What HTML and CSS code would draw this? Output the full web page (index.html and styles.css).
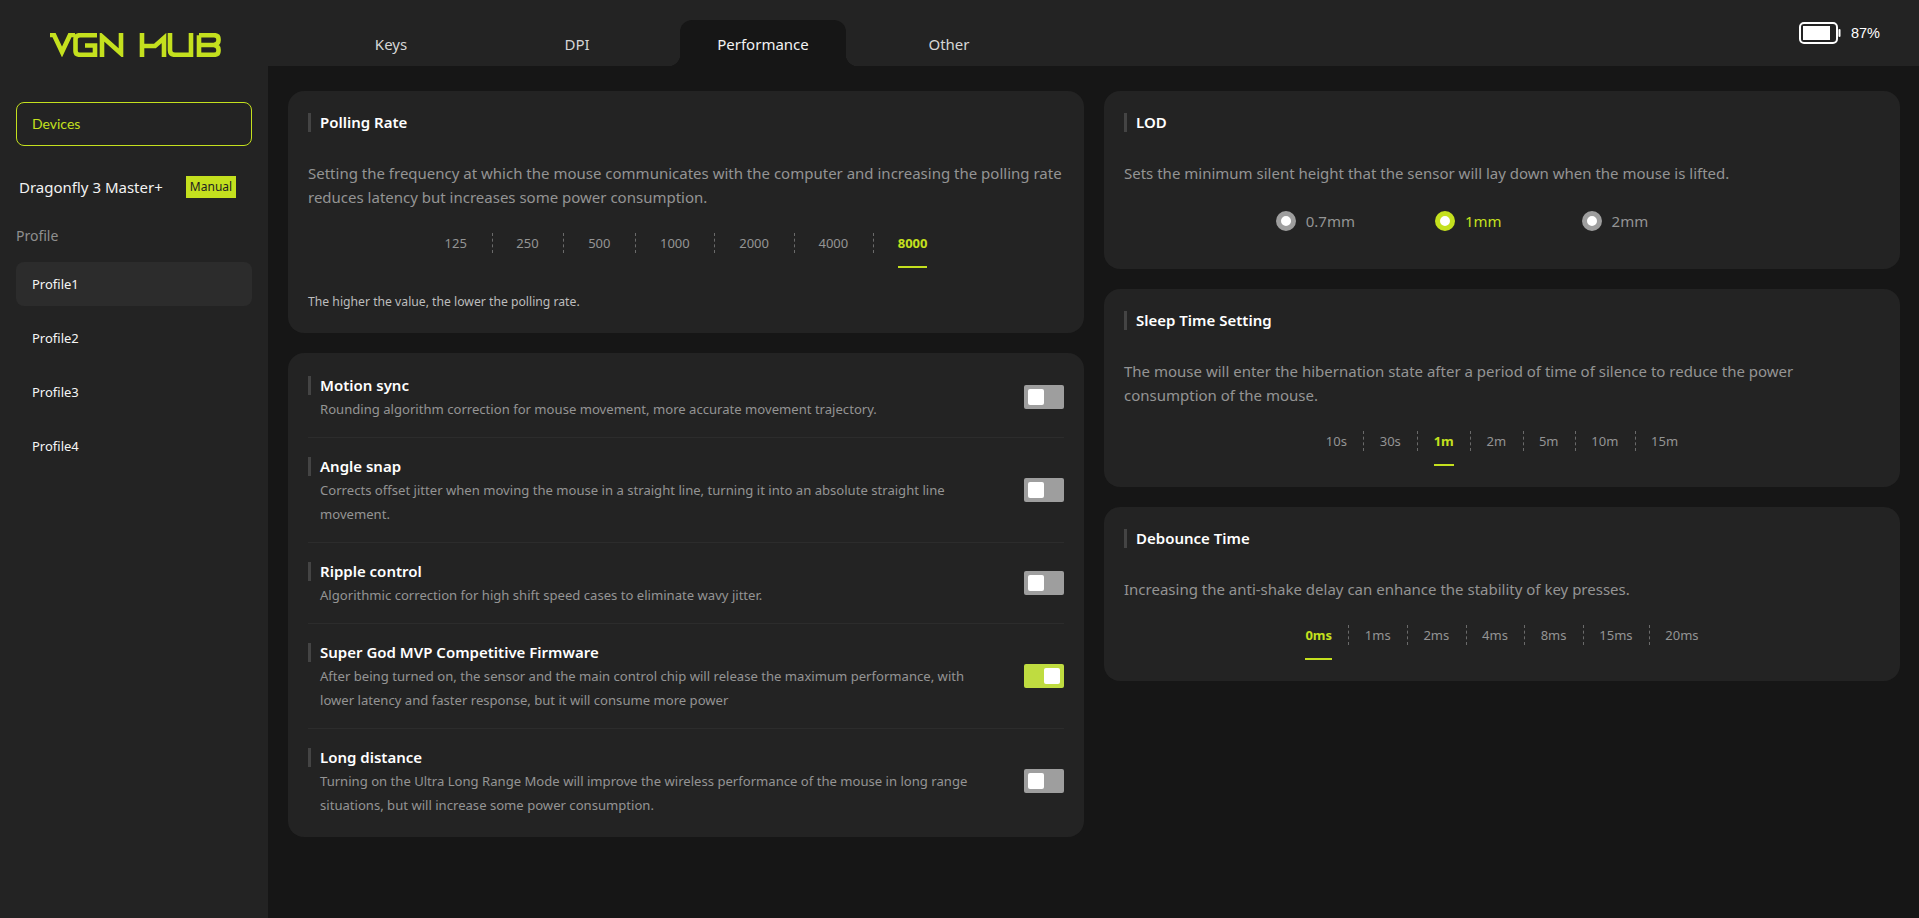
FILE: index.html
```html
<!DOCTYPE html>
<html lang="en">
<head>
<meta charset="utf-8">
<title>VGN HUB</title>
<link rel="stylesheet" href="styles.css">
</head>
<body>
<div class="app">
  <aside class="sidebar">
    <div class="logo">
      <svg class="logo-svg" width="172" height="24" viewBox="0 0 172 24" fill="none" stroke="#c4e01e" stroke-width="4.6">
        <path d="M1 2 H5 L13 19 L21 2 H26"/>
        <path d="M48 2.2 H31 Q26.5 2.2 26.5 6 V18 Q26.5 21.8 31 21.8 H46 V12.5 H36"/>
        <path d="M53 24 V3.5 L72 20.5 V0"/>
        <path d="M93 0 V24 M93 13 H106 L115 5 V24"/>
        <path d="M121 0 V17 Q121 21.8 126 21.8 H142 V0"/>
        <path d="M150 2.2 H165 Q169.5 2.2 169.5 6 V7.5 Q169.5 11 165 12 H152 M165 12 Q169.5 13 169.5 16.5 V18 Q169.5 21.8 165 21.8 H150 V2.2"/>
      </svg>
    </div>
    <div class="devices">Devices</div>
    <div class="device-row">
      <span class="device-name">Dragonfly 3 Master+</span>
      <span class="badge">Manual</span>
    </div>
    <div class="profile-label">Profile</div>
    <ul class="profiles">
      <li class="profile active">Profile1</li>
      <li class="profile">Profile2</li>
      <li class="profile">Profile3</li>
      <li class="profile">Profile4</li>
    </ul>
  </aside>
  <div class="main">
    <header class="topbar">
      <nav class="tabs">
        <div class="tab">Keys</div>
        <div class="tab">DPI</div>
        <div class="tab active">Performance</div>
        <div class="tab">Other</div>
      </nav>
      <div class="battery">
        <svg width="42" height="22" viewBox="0 0 42 22" fill="none">
          <rect x="1" y="1" width="37" height="20" rx="4" stroke="#fff" stroke-width="2"/>
          <rect x="4" y="4" width="27" height="14" fill="#fff"/>
          <rect x="39.5" y="7" width="2" height="8" rx="1" fill="#fff"/>
        </svg>
        <span>87%</span>
      </div>
    </header>
    <div class="content">
      <div class="col">
        <section class="card">
          <h2 class="card-title">Polling Rate</h2>
          <p class="desc">Setting the frequency at which the mouse communicates with the computer and increasing the polling rate reduces latency but increases some power consumption.</p>
          <div class="seg wide">
            <span class="seg-item"><span class="seg-text">125</span></span>
            <span class="seg-item"><span class="seg-text">250</span></span>
            <span class="seg-item"><span class="seg-text">500</span></span>
            <span class="seg-item"><span class="seg-text">1000</span></span>
            <span class="seg-item"><span class="seg-text">2000</span></span>
            <span class="seg-item"><span class="seg-text">4000</span></span>
            <span class="seg-item on"><span class="seg-text">8000</span></span>
          </div>
          <p class="note">The higher the value, the lower the polling rate.</p>
        </section>
        <section class="card">
          <div class="row">
            <div class="row-text">
              <h3 class="row-title">Motion sync</h3>
              <p class="row-desc">Rounding algorithm correction for mouse movement, more accurate movement trajectory.</p>
            </div>
            <span class="switch"></span>
          </div>
          <div class="row">
            <div class="row-text">
              <h3 class="row-title">Angle snap</h3>
              <p class="row-desc">Corrects offset jitter when moving the mouse in a straight line, turning it into an absolute straight line movement.</p>
            </div>
            <span class="switch"></span>
          </div>
          <div class="row">
            <div class="row-text">
              <h3 class="row-title">Ripple control</h3>
              <p class="row-desc">Algorithmic correction for high shift speed cases to eliminate wavy jitter.</p>
            </div>
            <span class="switch"></span>
          </div>
          <div class="row">
            <div class="row-text">
              <h3 class="row-title">Super God MVP Competitive Firmware</h3>
              <p class="row-desc">After being turned on, the sensor and the main control chip will release the maximum performance, with lower latency and faster response, but it will consume more power</p>
            </div>
            <span class="switch on"></span>
          </div>
          <div class="row">
            <div class="row-text">
              <h3 class="row-title">Long distance</h3>
              <p class="row-desc">Turning on the Ultra Long Range Mode will improve the wireless performance of the mouse in long range situations, but will increase some power consumption.</p>
            </div>
            <span class="switch"></span>
          </div>
        </section>
      </div>
      <div class="col">
        <section class="card">
          <h2 class="card-title">LOD</h2>
          <p class="desc">Sets the minimum silent height that the sensor will lay down when the mouse is lifted.</p>
          <div class="radios">
            <span class="radio"><i class="dot"></i>0.7mm</span>
            <span class="radio on"><i class="dot"></i>1mm</span>
            <span class="radio"><i class="dot"></i>2mm</span>
          </div>
        </section>
        <section class="card">
          <h2 class="card-title">Sleep Time Setting</h2>
          <p class="desc">The mouse will enter the hibernation state after a period of time of silence to reduce the power consumption of the mouse.</p>
          <div class="seg tight">
            <span class="seg-item"><span class="seg-text">10s</span></span>
            <span class="seg-item"><span class="seg-text">30s</span></span>
            <span class="seg-item on"><span class="seg-text">1m</span></span>
            <span class="seg-item"><span class="seg-text">2m</span></span>
            <span class="seg-item"><span class="seg-text">5m</span></span>
            <span class="seg-item"><span class="seg-text">10m</span></span>
            <span class="seg-item"><span class="seg-text">15m</span></span>
          </div>
        </section>
        <section class="card">
          <h2 class="card-title">Debounce Time</h2>
          <p class="desc">Increasing the anti-shake delay can enhance the stability of key presses.</p>
          <div class="seg tight">
            <span class="seg-item on"><span class="seg-text">0ms</span></span>
            <span class="seg-item"><span class="seg-text">1ms</span></span>
            <span class="seg-item"><span class="seg-text">2ms</span></span>
            <span class="seg-item"><span class="seg-text">4ms</span></span>
            <span class="seg-item"><span class="seg-text">8ms</span></span>
            <span class="seg-item"><span class="seg-text">15ms</span></span>
            <span class="seg-item"><span class="seg-text">20ms</span></span>
          </div>
        </section>
      </div>
    </div>
  </div>
</div>
</body>
</html>
```
FILE: styles.css
```css
* { box-sizing: border-box; }
html, body { margin: 0; height: 100%; overflow: hidden; }
body { background: #161616; color: #fff; font-family: "Noto Sans", "Open Sans", sans-serif; font-size: 14px; }
.app { display: flex; height: 918px; }
.sidebar { width: 268px; flex: none; background: #232323; padding: 0 16px; }
.logo { padding: 33px 0 0 33px; height: 102px; }
.logo-svg { display: block; }
.devices { height: 44px; border: 1px solid #c4e01e; border-radius: 8px; padding-left: 15px; line-height: 42px; color: #c4e01e; font-family: Lato, sans-serif; font-size: 14px; }
.device-row { display: flex; align-items: center; height: 22px; margin-top: 30px; padding-left: 3px; }
.device-name { font-size: 15px; width: 167px; flex: none; color: #f2f2f2; }
.badge { width: 50px; height: 22px; line-height: 22px; text-align: center; background: #c4e01e; color: #222; font-size: 12px; }
.profile-label { margin-top: 26px; line-height: 24px; color: #8f8f8f; font-size: 14px; }
.profiles { list-style: none; margin: 14px 0 0; padding: 0; display: flex; flex-direction: column; gap: 10px; }
.profile { height: 44px; line-height: 44px; padding-left: 16px; font-size: 13px; border-radius: 8px; color: #f5f5f5; }
.profile.active { background: #2c2c2c; }
.main { flex: 1; min-width: 0; display: flex; flex-direction: column; }
.topbar { height: 66px; flex: none; background: #232323; display: flex; justify-content: space-between; padding: 20px 39px 0 40px; }
.tabs { display: flex; gap: 20px; }
.tab { position: relative; width: 166px; height: 46px; line-height: 48px; text-align: center; font-size: 15px; color: #d6d6d6; border-radius: 12px 12px 0 0; }
.tab.active { background: #161616; color: #f2f2f2; }
.tab.active::before, .tab.active::after { content: ""; position: absolute; bottom: 0; width: 12px; height: 12px; }
.tab.active::before { left: -12px; background: radial-gradient(circle at 0 0, transparent 12px, #161616 12.5px); }
.tab.active::after { right: -12px; background: radial-gradient(circle at 100% 0, transparent 12px, #161616 12.5px); }
.battery { display: flex; align-items: center; gap: 10px; height: 25px; font-size: 14.5px; font-family: "Liberation Sans", sans-serif; }
.battery svg { display: block; }
.content { display: grid; grid-template-columns: 796px 796px; gap: 20px; padding: 25px 0 0 20px; }
.col { display: flex; flex-direction: column; gap: 20px; align-items: stretch; }
.card { background: #232323; border-radius: 16px; padding: 20px; }
.card-title { margin: 0 0 24px; position: relative; padding-left: 12px; line-height: 22px; height: 26px; font-size: 15px; font-weight: 600; color: #fff; }
.card-title::before { content: ""; position: absolute; left: 0; top: 2px; width: 3px; height: 19px; background: #444; }
.desc { margin: 0; line-height: 24px; font-size: 15px; color: #949494; }
.seg { display: flex; justify-content: center; height: 51px; margin-top: 9px; }
.seg-item { position: relative; display: flex; align-items: flex-start; height: 51px; font-size: 13px; color: #949494; }
.seg-item + .seg-item::before { content: ""; position: absolute; left: 0; top: 15px; height: 20px; border-left: 1px dashed #6a6a6a; }
.seg-text { position: relative; display: block; height: 50px; line-height: 50px; }
.seg-item.on { color: #c4e01e; font-weight: 700; }
.seg-item.on .seg-text::after { content: ""; position: absolute; left: 0; right: 0; bottom: 0; height: 2px; background: #c4e01e; }
.seg.wide .seg-item { padding: 0 24.75px; }
.seg.tight .seg-item { padding: 0 16.4px; }
.note { margin: 21px 0 -1px; line-height: 24px; font-size: 12.2px; color: #bdbdbd; }
.row { display: flex; align-items: center; justify-content: space-between; padding: 16px 0; border-bottom: 1px solid #2c2c2c; }
.row:first-child { padding-top: 0; }
.row:last-child { border-bottom: 0; padding-bottom: 0; }
.row-text { width: 680px; padding-left: 12px; position: relative; }
.row-text::before { content: ""; position: absolute; left: 0; top: 3px; width: 3px; height: 19px; background: #444; }
.row-title { margin: 0; line-height: 24px; font-size: 15px; font-weight: 600; color: #fff; }
.row-desc { margin: 0; line-height: 24px; font-size: 13.1px; color: #949494; }
.switch { position: relative; flex: none; width: 40px; height: 24px; border-radius: 2px; background: #9e9e9e; }
.switch::after { content: ""; position: absolute; left: 4px; top: 4px; width: 16px; height: 16px; border-radius: 2px; background: #fff; }
.switch.on { background: #bfdc40; }
.switch.on::after { left: 20px; }
.radios { display: flex; justify-content: center; margin: 24px 0 16px; }
.radio { display: flex; align-items: center; gap: 10px; height: 24px; margin-right: 80px; font-size: 15px; color: #949494; }
.radio.on { color: #c4e01e; }
.dot { width: 20px; height: 20px; border-radius: 50%; background: #fff; border: 5px solid #9e9e9e; }
.radio.on .dot { border-color: #c4e01e; }
```
